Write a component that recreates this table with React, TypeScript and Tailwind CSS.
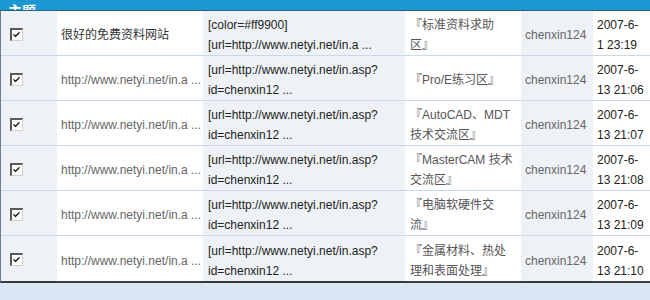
import React from "react";

const rows = [
  {
    title: "很好的免费资料网站",
    titleDark: true,
    content: ["[color=#ff9900]", "[url=http://www.netyi.net/in.a ..."],
    forum: ["『标准资料求助", "区』"],
    date: ["2007-6-", "1 23:19"],
  },
  {
    title: "http://www.netyi.net/in.a ...",
    content: ["[url=http://www.netyi.net/in.asp?", "id=chenxin12 ..."],
    forum: ["『Pro/E练习区』"],
    date: ["2007-6-", "13 21:06"],
  },
  {
    title: "http://www.netyi.net/in.a ...",
    content: ["[url=http://www.netyi.net/in.asp?", "id=chenxin12 ..."],
    forum: ["『AutoCAD、MDT", "技术交流区』"],
    date: ["2007-6-", "13 21:07"],
  },
  {
    title: "http://www.netyi.net/in.a ...",
    content: ["[url=http://www.netyi.net/in.asp?", "id=chenxin12 ..."],
    forum: ["『MasterCAM 技术", "交流区』"],
    date: ["2007-6-", "13 21:08"],
  },
  {
    title: "http://www.netyi.net/in.a ...",
    content: ["[url=http://www.netyi.net/in.asp?", "id=chenxin12 ..."],
    forum: ["『电脑软硬件交", "流』"],
    date: ["2007-6-", "13 21:09"],
  },
  {
    title: "http://www.netyi.net/in.a ...",
    content: ["[url=http://www.netyi.net/in.asp?", "id=chenxin12 ..."],
    forum: ["『金属材料、热处", "理和表面处理』"],
    date: ["2007-6-", "13 21:10"],
  },
];

function CheckBox() {
  return (
    <div className="w-[13px] h-[13px] bg-white border-t-2 border-l-2 border-t-[#5a5a5a] border-l-[#5a5a5a] border-b border-r border-b-[#d4d0c8] border-r-[#d4d0c8] relative">
      <svg viewBox="0 0 9 9" className="absolute left-[0px] top-[0px] w-[9px] h-[9px]">
        <path d="M1.5 3.5 L3.5 5.5 L7.5 1.5 L7.5 3.2 L3.5 7.2 L1.5 5.2 Z" fill="#000" />
      </svg>
    </div>
  );
}

export default function App() {
  return (
    <div
      className="w-[650px] h-[300px] bg-[#d9e6f3] overflow-hidden text-[12px] leading-[20px]"
      style={{ fontFamily: '"Liberation Sans", Arial, "Noto Sans CJK SC", sans-serif' }}
    >
      <div className="h-[11px] bg-[#1b98d2] border-b border-[#2f5f7f] overflow-hidden flex items-end pl-[8px]">
        <span className="text-white font-bold text-[14px] leading-[16px] mb-[-9px]">主题</span>
      </div>
      <div className="border-l border-[#6d7f8e] border-b-2 border-b-[#3a3a3a] w-[650px]">
        {rows.map((r, i) => (
          <div
            key={i}
            className={`flex h-[45px] ${i < rows.length - 1 ? "border-b border-[#c9d9ea]" : ""}`}
          >
            <div className="w-[56px] bg-[#eef2f7] flex items-center pl-[9px] pt-[2px]">
              <CheckBox />
            </div>
            <div
              className={`w-[146px] bg-white flex items-center pl-[4px] pt-[4px] ${r.titleDark ? "text-[#333]" : "text-[#666]"}`}
            >
              {r.title}
            </div>
            <div className="w-[202px] bg-[#eef2f7] flex flex-col justify-center pl-[5px] pt-[4px] text-[#222]">
              {r.content.map((c, j) => (
                <div key={j} className="whitespace-nowrap">{c}</div>
              ))}
            </div>
            <div className="w-[116px] bg-white flex flex-col justify-center pl-[5px] pt-[4px] text-[#555]">
              {r.forum.map((c, j) => (
                <div key={j} className="whitespace-nowrap">{c}</div>
              ))}
            </div>
            <div className="w-[72px] bg-[#eef2f7] flex items-center pl-[4px] pt-[4px] text-[#666]">
              chenxin124
            </div>
            <div className="flex-1 bg-white flex flex-col justify-center pl-[4px] pt-[4px] text-[#222]">
              {r.date.map((c, j) => (
                <div key={j} className="whitespace-nowrap">{c}</div>
              ))}
            </div>
          </div>
        ))}
      </div>
    </div>
  );
}
